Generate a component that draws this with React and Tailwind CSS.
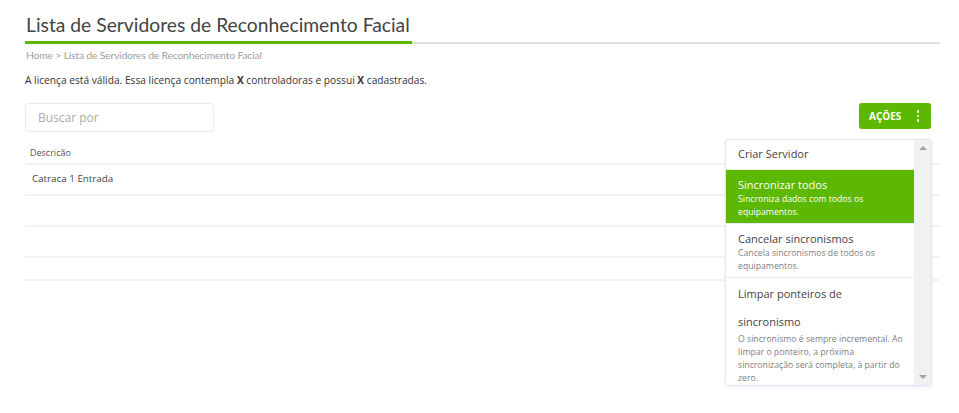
import React from "react";

const rows = ["Catraca 1 Entrada", "", ""];

function MenuItem({ title, desc, active, tall }) {
  return (
    <div
      className={
        "pl-3 pr-[7px] border-b border-[#ececec] " +
        (active ? "bg-[#5cb800] text-white" : "bg-white text-[#444]")
      }
    >
      <div className={"text-[11px] " + (tall ? "leading-[28px] pt-[2px]" : "leading-[16px] pt-[7px]")}>
        {title}
      </div>
      <div
        className={
          "text-[8.7px] pb-[5px] " +
          (tall ? "leading-[13px] -mt-[3px]" : "leading-[12.5px]") +
          (active ? " text-white" : " text-[#808080]")
        }
      >
        {desc}
      </div>
    </div>
  );
}

function App() {
  return (
    <div className="min-h-screen bg-white pl-[25px] pr-[19px] pt-[12px] font-['Open_Sans',sans-serif] text-[#333]">
      {/* Título */}
      <div className="flex border-b-2 border-[#e0e0e0]">
        <h1 className="border-b-[3px] border-[#5cb800] -mb-[2px] pl-[1px] pr-[2px] pb-[3px] text-[19.3px] leading-[26px] text-[#444] font-['Lato',sans-serif]">
          Lista de Servidores de Reconhecimento Facial
        </h1>
      </div>

      <div className="mt-[4px] pl-[1px] text-[10.4px] leading-[14px] text-[#a0a0a0] font-['Lato',sans-serif] tracking-[-0.2px]">
        Home &gt; Lista de Servidores de Reconhecimento Facial
      </div>

      <p className="mt-[10px] text-[10.2px] leading-[16px] text-[#333]">
        A licença está válida. Essa licença contempla <b>X</b> controladoras e possui <b>X</b> cadastradas.
      </p>

      <div className="mt-[15px] flex items-start justify-between">
        <div className="w-[189px] h-[29px] border border-[#ececec] rounded-[3px] flex items-center pl-[12px] text-[12px] text-[#aaa]">
          Buscar por
        </div>
        <div className="relative mr-[9px]">
          <button className="w-[72px] h-[26px] rounded-[3px] bg-[#5cb800] text-white text-[10px] font-bold flex items-center pl-[10px]">
            AÇÕES
            <span className="ml-auto mr-[12px] flex flex-col gap-[2px]">
              <span className="w-[2.5px] h-[2.5px] bg-white rounded-full"></span>
              <span className="w-[2.5px] h-[2.5px] bg-white rounded-full"></span>
              <span className="w-[2.5px] h-[2.5px] bg-white rounded-full"></span>
            </span>
          </button>

          {/* Menu de ações */}
          <div className="absolute right-[-1px] top-[36px] z-10 w-[207px] h-[247px] border border-[#e3e6f5] rounded-[3px] bg-white shadow-[0_1px_3px_rgba(120,130,200,0.15)] flex overflow-hidden">
            <div className="flex-1">
              <div className="px-3 h-[30px] flex items-center text-[11px] text-[#444] border-b border-[#ececec]">
                Criar Servidor
              </div>
              <MenuItem
                active
                title="Sincronizar todos"
                desc="Sincroniza dados com todos os equipamentos."
              />
              <MenuItem
                title="Cancelar sincronismos"
                desc="Cancela sincronismos de todos os equipamentos."
              />
              <MenuItem
                tall
                title="Limpar ponteiros de sincronismo"
                desc="O sincronismo é sempre incremental. Ao limpar o ponteiro, a próxima sincronização será completa, à partir do zero."
              />
            </div>
            <div className="w-[17px] bg-[#f1f1f1] flex flex-col items-center justify-between py-[6px]">
              <span className="w-0 h-0 border-l-[4px] border-r-[4px] border-b-[4px] border-l-transparent border-r-transparent border-b-[#a3a3a3]"></span>
              <span className="w-0 h-0 border-l-[4px] border-r-[4px] border-t-[4px] border-l-transparent border-r-transparent border-t-[#a3a3a3]"></span>
            </div>
          </div>
        </div>
      </div>

      {/* Tabela */}
      <div className="mt-[11px]">
        <div className="h-[22px] border-b-2 border-[#f2f2f2] pl-[5px] text-[9px] leading-[20px] text-[#555]">
          Descricão
        </div>
        {rows.map((r, i) => (
          <div key={i} className="h-[31px] border-b-2 border-[#f2f2f2] pl-[7px] flex items-center text-[9.8px] text-[#444]">
            {r}
          </div>
        ))}
        <div className="h-[23px] border-b-2 border-[#f2f2f2]"></div>
      </div>
    </div>
  );
}

export default App;
